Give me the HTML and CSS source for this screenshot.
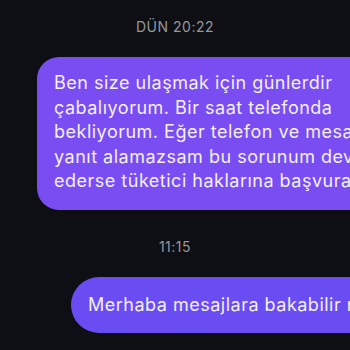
FILE: index.html
```html
<!DOCTYPE html>
<html lang="tr">
<head>
<meta charset="utf-8">
<link rel="stylesheet" href="styles.css">
</head>
<body>
<div class="chat">
  <div class="time time-first">DÜN 20:22</div>
  <div class="bubble bubble-long">Ben size ulaşmak için günlerdir<br>çabalıyorum. Bir saat telefonda<br>bekliyorum. Eğer telefon ve mesajlardan<br>yanıt alamazsam bu sorunum devam<br>ederse tüketici haklarına başvuracağım.</div>
  <div class="time time-second">11:15</div>
  <div class="bubble bubble-short">Merhaba mesajlara bakabilir misiniz?</div>
</div>
</body>
</html>
```

FILE: styles.css
```css
html, body {
  margin: 0;
  padding: 0;
  background: #0e0f14;
  overflow: hidden;
  width: 350px;
  height: 350px;
}

.chat {
  display: flex;
  flex-direction: column;
  align-items: flex-start;
  font-family: Inter, "Noto Sans", sans-serif;
  width: 700px;
}

.time {
  width: 350px;
  text-align: center;
  font-size: 14px;
  line-height: 16px;
  color: #96969c;
  letter-spacing: 0.5px;
}

.time-first {
  margin-top: 19px;
}

.time-second {
  margin-top: 29px;
}

.bubble {
  font-size: 18px;
  line-height: 24.5px;
  letter-spacing: 0.5px;
  color: #f4effe;
  white-space: nowrap;
}

.bubble-long {
  margin-top: 22px;
  margin-left: 37px;
  background: #7a4df2;
  border-radius: 22px;
  padding: 14px 24px 16px 17px;
}

.bubble-short {
  margin-top: 22px;
  margin-left: 71px;
  background: #6a4cf3;
  border-radius: 28px;
  padding: 16px 24px 15.5px 17px;
}
```
